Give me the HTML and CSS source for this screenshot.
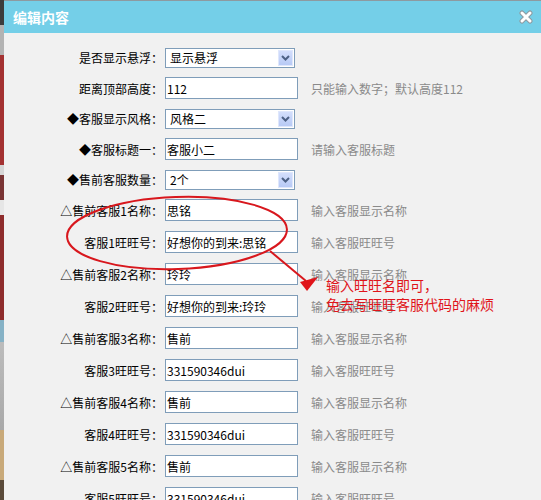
FILE: index.html
```html
<!DOCTYPE html>
<html lang="zh-CN">
<head>
  <meta charset="UTF-8">
  <title>编辑内容</title>
  <link rel="stylesheet" href="styles.css">
</head>
<body>
<div class="page">
  <div class="backdrop"></div>

  <div class="dialog">
    <div class="titlebar">
      <span class="title">编辑内容</span>
      <svg class="close" width="14" height="14" viewBox="0 0 14 14">
        <path d="M3 3 L11 11 M11 3 L3 11" stroke="#8d9aa0" stroke-width="5" stroke-linecap="round"/>
        <path d="M3 3 L11 11 M11 3 L3 11" stroke="#fff" stroke-width="3" stroke-linecap="round"/>
      </svg>
    </div>

    <div class="form">
      <div class="row sel">
        <label class="lbl">是否显示悬浮：</label>
        <div class="select"><span>显示悬浮</span><i class="drop"><svg width="9" height="6" viewBox="0 0 9 6"><path d="M1 1 L4.5 4.5 L8 1" fill="none" stroke="#4d6185" stroke-width="2"/></svg></i></div>
      </div>
      <div class="row">
        <label class="lbl">距离顶部高度：</label>
        <input class="field" value="112">
        <span class="hint">只能输入数字；默认高度112</span>
      </div>
      <div class="row sel">
        <label class="lbl">◆客服显示风格：</label>
        <div class="select"><span>风格二</span><i class="drop"><svg width="9" height="6" viewBox="0 0 9 6"><path d="M1 1 L4.5 4.5 L8 1" fill="none" stroke="#4d6185" stroke-width="2"/></svg></i></div>
      </div>
      <div class="row">
        <label class="lbl">◆客服标题一：</label>
        <input class="field" value="客服小二">
        <span class="hint">请输入客服标题</span>
      </div>
      <div class="row sel">
        <label class="lbl">◆售前客服数量：</label>
        <div class="select"><span>2个</span><i class="drop"><svg width="9" height="6" viewBox="0 0 9 6"><path d="M1 1 L4.5 4.5 L8 1" fill="none" stroke="#4d6185" stroke-width="2"/></svg></i></div>
      </div>
      <div class="row">
        <label class="lbl">△售前客服1名称：</label>
        <input class="field" value="思铭">
        <span class="hint">输入客服显示名称</span>
      </div>
      <div class="row">
        <label class="lbl">客服1旺旺号：</label>
        <input class="field" value="好想你的到来:思铭">
        <span class="hint">输入客服旺旺号</span>
      </div>
      <div class="row">
        <label class="lbl">△售前客服2名称：</label>
        <input class="field" value="玲玲">
        <span class="hint">输入客服显示名称</span>
      </div>
      <div class="row">
        <label class="lbl">客服2旺旺号：</label>
        <input class="field" value="好想你的到来:玲玲">
        <span class="hint">输入客服旺旺号</span>
      </div>
      <div class="row">
        <label class="lbl">△售前客服3名称：</label>
        <input class="field" value="售前">
        <span class="hint">输入客服显示名称</span>
      </div>
      <div class="row">
        <label class="lbl">客服3旺旺号：</label>
        <input class="field" value="331590346dui">
        <span class="hint">输入客服旺旺号</span>
      </div>
      <div class="row">
        <label class="lbl">△售前客服4名称：</label>
        <input class="field" value="售前">
        <span class="hint">输入客服显示名称</span>
      </div>
      <div class="row">
        <label class="lbl">客服4旺旺号：</label>
        <input class="field" value="331590346dui">
        <span class="hint">输入客服旺旺号</span>
      </div>
      <div class="row">
        <label class="lbl">△售前客服5名称：</label>
        <input class="field" value="售前">
        <span class="hint">输入客服显示名称</span>
      </div>
      <div class="row">
        <label class="lbl">客服5旺旺号：</label>
        <input class="field" value="331590346dui">
        <span class="hint">输入客服旺旺号</span>
      </div>
    </div>
  </div>

  <!-- 红色标注 -->
  <svg class="markup" width="541" height="500" viewBox="0 0 541 500">
    <ellipse cx="177" cy="233" rx="110" ry="36" transform="rotate(-2 177 233)" fill="none" stroke="#d8171d" stroke-width="2"/>
    <line x1="270" y1="251" x2="306" y2="281" stroke="#d8171d" stroke-width="2"/>
    <polygon points="318,277 307,291 300,282" fill="#e0141a"/>
  </svg>
  <div class="note">输入旺旺名即可，<br>免去写旺旺客服代码的麻烦</div>
</div>
</body>
</html>
```

FILE: styles.css
```css
* { box-sizing: border-box; margin: 0; padding: 0; }

html, body { height: 100%; overflow: hidden; }

body {
  font-family: "Noto Sans CJK SC", "Liberation Sans", sans-serif;
  font-size: 12px;
  color: #000;
  background: #f1f1f1;
}

.page {
  position: relative;
  display: flex;
  height: 500px;
}

/* 弹窗后面露出来的页面 */
.backdrop {
  width: 4px;
  flex-shrink: 0;
  background: linear-gradient(to bottom,
    #3c3c3c 0, #3c3c3c 25px,
    #b3b3b3 25px, #b3b3b3 55px,
    #a43232 55px, #a43232 165px,
    #d6d6d6 165px, #d6d6d6 175px,
    #7a3434 175px, #7a3434 200px,
    #e6e6e6 200px, #e6e6e6 215px,
    #8e2c2c 215px, #8e2c2c 320px,
    #86b2c6 320px, #86b2c6 342px,
    #bcbcbc 342px, #a9a9a9 430px,
    #c9aa7a 430px, #c9aa7a 480px,
    #5a4a3a 480px);
}

.dialog {
  flex: 1;
  background: #f1f1f1;
  border-top: 1px solid #8d9aa0;
}

.titlebar {
  height: 32px;
  background: #74cfe8;
  display: flex;
  align-items: center;
  justify-content: space-between;
  padding: 0 8px 0 9px;
  color: #fff;
}

.title {
  font-size: 14px;
  font-weight: bold;
}

.form {
  padding-top: 10px;
}

.row {
  display: flex;
  align-items: center;
  height: 32px;
}

.row.sel {
  height: 29px;
}

.lbl {
  width: 159px;
  flex-shrink: 0;
  text-align: right;
}

.field {
  margin-left: 2px;
  width: 133px;
  height: 22px;
  border: 1px solid #7f9db9;
  background: #fff;
  font: inherit;
  color: #000;
  padding: 0 1px;
  outline: none;
}

.select {
  margin-left: 2px;
  width: 130px;
  height: 20px;
  border: 1px solid #7f9db9;
  background: #fff;
  display: flex;
  align-items: center;
  padding-left: 4px;
}

.select span {
  flex: 1;
}

.drop {
  width: 15px;
  height: 16px;
  margin-right: 1px;
  background: linear-gradient(#d3defc, #b8caf5);
  border: 1px solid #dfe7fc;
  display: flex;
  align-items: center;
  justify-content: center;
}

.hint {
  margin-left: 13px;
  color: #8a8a8a;
}

.markup {
  position: absolute;
  left: 0;
  top: 0;
  pointer-events: none;
}

.note {
  position: absolute;
  left: 326px;
  top: 276px;
  font-size: 14px;
  line-height: 19px;
  color: #e0141a;
}
```
